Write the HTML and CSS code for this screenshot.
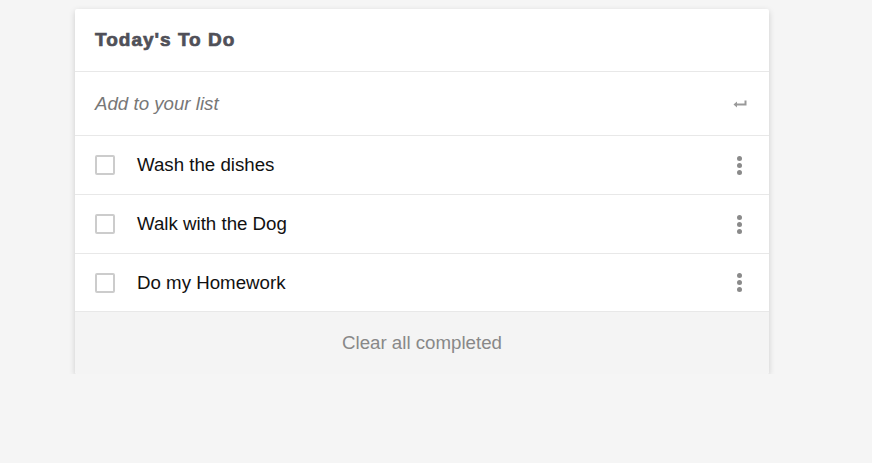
FILE: index.html
```html
<!DOCTYPE html>
<html>
<head>
<meta charset="utf-8">
<link rel="stylesheet" href="styles.css">
</head>
<body>
<div class="card">
  <div class="header">Today's To Do</div>
  <div class="add">
    <span class="placeholder">Add to your list</span>
    <svg class="enter" width="14" height="8" viewBox="0 0 14 8"><path d="M12.5 0.5 V4.5 H3" fill="none" stroke="#999" stroke-width="2"/><path d="M0.5 4.5 L4 1.5 V7.5 Z" fill="#999"/></svg>
  </div>
  <div class="item"><span class="box"></span><span class="label">Wash the dishes</span><span class="dots"><i></i><i></i><i></i></span></div>
  <div class="item"><span class="box"></span><span class="label">Walk with the Dog</span><span class="dots"><i></i><i></i><i></i></span></div>
  <div class="item last"><span class="box"></span><span class="label">Do my Homework</span><span class="dots"><i></i><i></i><i></i></span></div>
  <div class="footer">Clear all completed</div>
</div>
</body>
</html>
```
FILE: styles.css
```css
body {
  margin: 0;
  background: #f5f5f5;
  font-family: "Liberation Sans", Arial, sans-serif;
}
.card {
  margin: 9px 0 0 75px;
  width: 694px;
  background: #fff;
  border-radius: 2px;
  box-shadow: 0 2px 6px rgba(0,0,0,0.16);
}
.header {
  height: 62px;
  display: flex;
  align-items: center;
  padding: 0 20px;
  font-size: 19px;
  font-weight: bold;
  color: #505058;
  -webkit-text-stroke: 0.7px #505058;
  letter-spacing: 1px;
  border-bottom: 1px solid #e8e8e8;
}
.add {
  height: 63px;
  display: flex;
  align-items: center;
  justify-content: space-between;
  padding: 0 22px 0 20px;
  border-bottom: 1px solid #e8e8e8;
}
.placeholder {
  font-size: 18.7px;
  font-style: italic;
  color: #777;
}
.enter { display: block; margin-top: 1px; }
.item {
  height: 58px;
  display: flex;
  align-items: center;
  padding: 0 20px;
  border-bottom: 1px solid #e8e8e8;
}
.item.last { height: 57px; }
.box {
  width: 16px;
  height: 16px;
  border: 2px solid #ccc;
  border-radius: 2px;
  flex: none;
}
.label {
  margin-left: 22px;
  font-size: 18.7px;
  color: #111;
  flex: 1;
}
.dots {
  display: flex;
  flex-direction: column;
  gap: 2px;
  margin-right: 7px;
}
.dots i {
  width: 5px;
  height: 5px;
  border-radius: 50%;
  background: #8a8a8a;
}
.footer {
  height: 62px;
  background: #f4f4f4;
  border-radius: 0 0 2px 2px;
  display: flex;
  align-items: center;
  justify-content: center;
  font-size: 18.7px;
  color: #888;
}
```
